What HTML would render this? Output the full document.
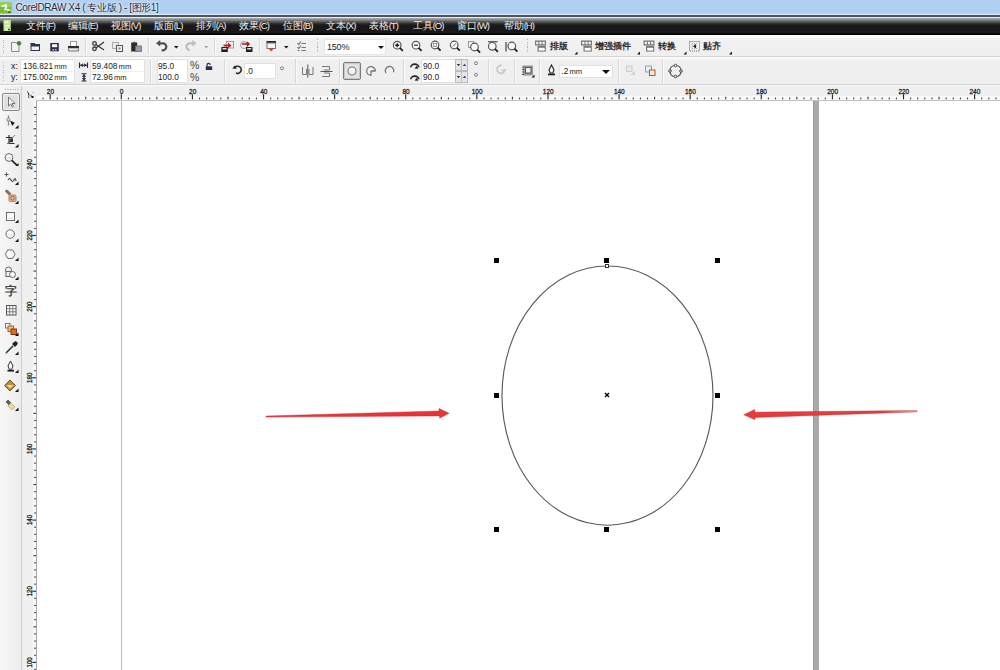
<!DOCTYPE html><html><head><meta charset="utf-8"><style>
*{margin:0;padding:0;box-sizing:border-box}
html,body{width:1000px;height:670px;overflow:hidden;background:#fff;font-family:"Liberation Sans",sans-serif}
.a{position:absolute}
#title{left:0;top:0;width:1000px;height:15px;background:linear-gradient(#b3d0f1,#acd0f1 80%,#bcdcf6);}
#tline{left:0;top:14px;width:1000px;height:1px;background:#dbe9f6}
#tdark{left:0;top:15px;width:1000px;height:2px;background:#4c5662}
#menu{left:0;top:17px;width:1000px;height:18px;background:linear-gradient(#ececec 0,#e6e6e6 1px,#a4a4a4 1.5px,#6a6a6a 4px,#262626 7px,#181818 9px,#181818 16px,#000 17px)}
#tb1{left:0;top:35px;width:1000px;height:22px;background:linear-gradient(#fff 0,#fdfdfd 2px,#f1f1f1 3px,#efefef 100%)}
#tb2{left:0;top:56px;width:1000px;height:30px;background:linear-gradient(#d6d6d6 0,#d6d6d6 1px,#fbfbfb 1px,#f8f8f8 3px,#efefef 4px,#efefef 28px,#d4d4d4 28px,#d4d4d4 29px,#fafafa 29px)}
.menu{top:20px;height:12px;font-size:9.6px;color:#eee;white-space:nowrap;line-height:12px}
.menu b{font-weight:normal;font-size:9.5px;letter-spacing:-1px;margin-left:-0.3px}
.ttl{left:15.5px;top:2px;font-size:10px;letter-spacing:-0.4px;color:#1e2a36;white-space:nowrap;line-height:12px;text-shadow:0 0 3px #fff,0 0 2px #fff}
.t{font-size:8.3px;color:#222;white-space:nowrap;line-height:10px}
.t i{font-style:normal;font-size:7.6px;margin-left:1.2px}
.sep{width:2px;background:linear-gradient(90deg,#d8d8d8 50%,#fbfbfb 50%)}
.fld{background:#fff;border:1px solid #e4e4e4}
.grip{width:1px;background:repeating-linear-gradient(#b4b4b4 0 1px,transparent 1px 2.5px)}
</style></head><body>
<div class="a" id="title"></div><div class="a" id="tline"></div><div class="a" id="tdark"></div><div class="a" id="menu"></div>
<div class="a" id="tb1"></div><div class="a" id="tb2"></div>
<svg class="a" style="left:0;top:0" width="16" height="34"><rect x="0" y="2" width="11.5" height="11.5" fill="#7cbc3c"/><rect x="0" y="2" width="11.5" height="5" fill="#96cc58"/><path d="M1.5 6.5 q3 -2 5 1 M5.5 4 q2 3 -1 6 M6.5 10 q2 -1 3.5 1" stroke="#f4fce8" stroke-width="1.8" fill="none"/><circle cx="9.3" cy="12" r="1" fill="#2a5a1a"/><rect x="3.5" y="20" width="7.3" height="11" fill="#c6e6a0"/><path d="M5 23 q2 -2 3 0 M5.5 26 h4 M5 29 h4" stroke="#f4fce8" stroke-width="1.2" fill="none"/><circle cx="9" cy="29.5" r="0.9" fill="#2a4a1a"/></svg>
<div class="a ttl">CorelDRAW X4 ( 专业版 ) - [图形1]</div>
<div class="a menu" style="left:26px">文件<b>(F)</b></div>
<div class="a menu" style="left:68px">编辑<b>(E)</b></div>
<div class="a menu" style="left:111px">视图<b>(V)</b></div>
<div class="a menu" style="left:154px">版面<b>(L)</b></div>
<div class="a menu" style="left:196px">排列<b>(A)</b></div>
<div class="a menu" style="left:239px">效果<b>(C)</b></div>
<div class="a menu" style="left:283px">位图<b>(B)</b></div>
<div class="a menu" style="left:326px">文本<b>(X)</b></div>
<div class="a menu" style="left:369px">表格<b>(T)</b></div>
<div class="a menu" style="left:413px">工具<b>(O)</b></div>
<div class="a menu" style="left:457px">窗口<b>(W)</b></div>
<div class="a menu" style="left:504px">帮助<b>(H)</b></div>
<div class="a grip" style="left:3px;top:40px;height:14px"></div>
<div class="a grip" style="left:3px;top:62px;height:20px"></div>
<div class="a sep" style="left:85px;top:38px;height:16px"></div>
<div class="a sep" style="left:148px;top:38px;height:16px"></div>
<div class="a sep" style="left:214px;top:38px;height:16px"></div>
<div class="a sep" style="left:259px;top:38px;height:16px"></div>
<div class="a grip" style="left:317px;top:39px;height:15px"></div>
<div class="a grip" style="left:527px;top:39px;height:15px"></div>
<div class="a" style="left:324px;top:39px;width:62px;height:16px;background:#fff;border:1px solid #e6e6e6"></div>
<div class="a t" style="left:327px;top:42px;font-size:9px;letter-spacing:-0.2px">150%</div>
<div class="a" style="left:377.5px;top:45.5px;width:0;height:0;border-left:3.5px solid transparent;border-right:3.5px solid transparent;border-top:3.5px solid #111"></div>
<div class="a" style="left:549.5px;top:40px;font-size:9.2px;line-height:12px;font-weight:bold;color:#2a2a2a;white-space:nowrap">排版</div>
<div class="a" style="left:594.5px;top:40px;font-size:9.2px;line-height:12px;font-weight:bold;color:#2a2a2a;white-space:nowrap">增强插件</div>
<div class="a" style="left:657.5px;top:40px;font-size:9.2px;line-height:12px;font-weight:bold;color:#2a2a2a;white-space:nowrap">转换</div>
<div class="a" style="left:703px;top:40px;font-size:9.2px;line-height:12px;font-weight:bold;color:#2a2a2a;white-space:nowrap">贴齐</div>
<div class="a t" style="left:11px;top:60.8px;font-size:8.8px">x:</div>
<div class="a t" style="left:11px;top:71.8px;font-size:8.8px">y:</div>
<div class="a" style="left:20px;top:59px;width:55px;height:24px;background:#fff;border:1px solid #e2e2e2"></div>
<div class="a" style="left:21px;top:71px;width:53px;height:1px;background:#eee"></div>
<div class="a t" style="left:23px;top:60.8px;">136.821<i>mm</i></div>
<div class="a t" style="left:23px;top:71.8px;">175.002<i>mm</i></div>
<div class="a" style="left:90px;top:59px;width:55px;height:24px;background:#fff;border:1px solid #e2e2e2"></div>
<div class="a" style="left:91px;top:71px;width:53px;height:1px;background:#eee"></div>
<div class="a t" style="left:92px;top:60.8px;">59.408<i>mm</i></div>
<div class="a t" style="left:92px;top:71.8px;">72.96<i>mm</i></div>
<div class="a sep" style="left:150px;top:59px;height:24px"></div>
<div class="a" style="left:157px;top:59px;width:31px;height:24px;background:#fff;border:1px solid #e2e2e2"></div>
<div class="a t" style="left:158px;top:60.8px;">95.0</div>
<div class="a t" style="left:158px;top:71.8px;">100.0</div>
<div class="a t" style="left:190px;top:59.5px;font-size:10.5px;color:#444">%</div>
<div class="a t" style="left:190px;top:71.5px;font-size:10.5px;color:#444">%</div>
<div class="a sep" style="left:224px;top:59px;height:24px"></div>
<div class="a" style="left:244px;top:63px;width:32px;height:16px;background:#fff;border:1px solid #e2e2e2"></div>
<div class="a t" style="left:246px;top:65.5px;">.0</div>
<div class="a sep" style="left:295px;top:59px;height:24px"></div>
<div class="a sep" style="left:339px;top:59px;height:24px"></div>
<div class="a sep" style="left:403px;top:59px;height:24px"></div>
<div class="a" style="left:421px;top:59px;width:35px;height:24px;background:#fff;border:1px solid #e2e2e2"></div>
<div class="a t" style="left:423px;top:60.8px;">90.0</div>
<div class="a t" style="left:423px;top:71.8px;">90.0</div>
<div class="a sep" style="left:488px;top:59px;height:24px"></div>
<div class="a sep" style="left:514px;top:59px;height:24px"></div>
<div class="a sep" style="left:539px;top:59px;height:24px"></div>
<div class="a" style="left:559px;top:65px;width:54px;height:13px;background:#fff;border:1px solid #e2e2e2"></div>
<div class="a t" style="left:561px;top:66px;font-size:8.8px">.2<i>mm</i></div>
<div class="a" style="left:602px;top:70px;width:0;height:0;border-left:4px solid transparent;border-right:4px solid transparent;border-top:4px solid #111"></div>
<div class="a sep" style="left:618px;top:59px;height:24px"></div>
<div class="a sep" style="left:662px;top:59px;height:24px"></div>
<svg class="a" style="left:0;top:0" width="1000" height="86">
<path d="M11.5 42.5 h5 l2.5 2.5 v6.5 h-7.5 Z" fill="#f4f4f4" stroke="#8a8a8a"/>
<circle cx="19" cy="43.3" r="2.2" fill="#3d8a2e"/>
<path d="M30.5 43 h4 l1 1 h4.5 v7 h-9.5 Z" fill="#2a3552"/>
<rect x="31.5" y="46.5" width="7.5" height="3.5" fill="#f2f2f2"/>
<rect x="50.3" y="43" width="8.5" height="8.3" fill="#2c2c48"/>
<rect x="52" y="44.2" width="5.2" height="3" fill="#f4f4f4"/>
<rect x="52.5" y="49" width="1.5" height="1.5" fill="#ccc"/><rect x="55" y="49" width="1.5" height="1.5" fill="#ccc"/>
<rect x="70.5" y="41.5" width="6" height="5" fill="#fff" stroke="#999"/>
<rect x="68" y="46" width="11" height="2.5" fill="#2f2f2f"/>
<path d="M68.5 48.5 v2.5 h10 v-2.5" fill="#e8e8e8" stroke="#777"/>
<g fill="none" stroke="#3a3a3a" stroke-width="1.3"><circle cx="94.5" cy="43.5" r="1.8"/><circle cx="94.5" cy="48.8" r="1.8"/><path d="M96 44.5 L104 50 M96 48 L104 42"/></g>
<rect x="112.5" y="42.5" width="6" height="6" fill="#e6ece6" stroke="#a9b1a9"/>
<rect x="116.5" y="45.5" width="6" height="6" fill="#f0f0f0" stroke="#555"/>
<rect x="118.5" y="47.5" width="2" height="2" fill="#888"/>
<rect x="131.2" y="42.5" width="6" height="9" fill="#2a2e1e"/>
<rect x="133" y="41.8" width="2.5" height="1.5" fill="#555"/>
<rect x="135.5" y="46" width="6" height="5.5" fill="#9a98b0" stroke="#6c6a80" stroke-width="0.8"/>
<path d="M159 43.3 h3.8 a3.5 3.5 0 0 1 0 7 h-1.2" fill="none" stroke="#4b4f59" stroke-width="2.2"/>
<path d="M156 43.3 l4.2 -3.3 v6.6 Z" fill="#4b4f59"/>
<path d="M174 46 h4.5 l-2.25 2.5 Z" fill="#111"/>
<path d="M193 43.3 h-3.3 a3.3 3.3 0 0 0 0 6.6" fill="none" stroke="#bdbdbd" stroke-width="2.2"/>
<path d="M196.5 43.3 l-4.2 -3.3 v6.6 Z" fill="#bdbdbd"/>
<path d="M204 46 h4.5 l-2.25 2.5 Z" fill="#aaa"/>
<rect x="226.5" y="41.5" width="7" height="6.5" fill="#f4f4f4" stroke="#999"/>
<rect x="221.3" y="47" width="6.5" height="5" fill="#1e1e1e"/><rect x="222.5" y="48" width="4" height="1.5" fill="#ddd"/>
<path d="M223.5 45.5 h5" stroke="#b81c1c" stroke-width="1.8"/><path d="M228 42.5 l3.5 3 l-3.5 3 Z" fill="#c01c1c"/>
<circle cx="244" cy="45" r="3.5" fill="#eee" stroke="#9a9aa8"/>
<rect x="246" y="47" width="6.5" height="5" fill="#1e1e1e"/><rect x="247.2" y="48" width="4" height="1.5" fill="#ddd"/>
<path d="M242 44 h7 M247 42 l2 2 l-2 2" stroke="#b01818" stroke-width="1.5" fill="none"/>
<rect x="266.5" y="41" width="9.5" height="2.2" fill="#222"/>
<rect x="267" y="43" width="8.5" height="5.5" fill="#f6f6f6" stroke="#777"/>
<path d="M268.5 48.5 l2.7 3 l2.7 -3 Z" fill="#e03a1a"/>
<path d="M284 46 h4.5 l-2.25 2.5 Z" fill="#111"/>
<g stroke="#777" stroke-width="1.2" fill="none"><path d="M297.5 43 l1.2 1.5 l2.3 -3 M301.5 43.5 h4.5 M297.5 47 l1.2 1.5 l2.3 -3 M301.5 47.5 h4.5 M297.5 50.5 h2 M301.5 50.5 h4.5"/></g>
<g><circle cx="397.2" cy="45.2" r="3.8" fill="#f8f8f8" stroke="#555" stroke-width="1.2"/><path d="M399.8 47.800000000000004 l3 3" stroke="#222" stroke-width="1.8"/><path d="M395.2 45.2 h4 M397.2 43.2 v4" stroke="#222" stroke-width="1.4"/></g>
<g><circle cx="416" cy="45.2" r="3.8" fill="#f8f8f8" stroke="#555" stroke-width="1.2"/><path d="M418.6 47.800000000000004 l3 3" stroke="#222" stroke-width="1.8"/><path d="M414 45.2 h4" stroke="#333" stroke-width="1.2"/></g>
<g><circle cx="435" cy="45" r="3.8" fill="#f8f8f8" stroke="#555" stroke-width="1.2"/><path d="M437.6 47.6 l3 3" stroke="#222" stroke-width="1.8"/><rect x="433.3" y="43.5" width="3.4" height="3" fill="none" stroke="#777" stroke-width="0.7"/></g>
<g><circle cx="454.2" cy="45" r="3.8" fill="#f8f8f8" stroke="#555" stroke-width="1.2"/><path d="M456.8 47.6 l3 3" stroke="#222" stroke-width="1.8"/><path d="M452.5 46.5 l3.5 -3" stroke="#666" stroke-width="0.9"/></g>
<rect x="468.5" y="41.5" width="5" height="6" fill="#f2f2f2" stroke="#999"/>
<g><circle cx="474.5" cy="47" r="3.8" fill="#f8f8f8" stroke="#555" stroke-width="1.2"/><path d="M477.1 49.6 l3 3" stroke="#222" stroke-width="1.8"/></g>
<path d="M488 41.8 h9.5" stroke="#444" stroke-width="1.2"/><g><circle cx="492.3" cy="46.3" r="3.8" fill="#f8f8f8" stroke="#555" stroke-width="1.2"/><path d="M494.90000000000003 48.9 l3 3" stroke="#222" stroke-width="1.8"/></g>
<path d="M506 42 v9.5" stroke="#444" stroke-width="1.2"/><g><circle cx="511.8" cy="46" r="3.8" fill="#f8f8f8" stroke="#555" stroke-width="1.2"/><path d="M514.4 48.6 l3 3" stroke="#222" stroke-width="1.8"/></g>
<rect x="535.0" y="40.5" width="11" height="5" fill="#777"/><rect x="536.2" y="41.8" width="2.2" height="2.4" fill="#f4f4ff"/><rect x="539.4" y="41.8" width="2.2" height="2.4" fill="#f4f4ff"/><rect x="542.6" y="41.8" width="2.2" height="2.4" fill="#f4f4ff"/><rect x="537.5" y="45.8" width="8.3" height="5.8" fill="#777"/><rect x="538.7" y="47.8" width="6" height="2.8" fill="#fff"/>
<rect x="581.0" y="40.5" width="11" height="5" fill="#777"/><rect x="582.2" y="41.8" width="2.2" height="2.4" fill="#f4f4ff"/><rect x="585.4" y="41.8" width="2.2" height="2.4" fill="#f4f4ff"/><rect x="588.6" y="41.8" width="2.2" height="2.4" fill="#f4f4ff"/><rect x="583.5" y="45.8" width="8.3" height="5.8" fill="#777"/><rect x="584.7" y="47.8" width="6" height="2.8" fill="#fff"/>
<rect x="643.5" y="40.5" width="11" height="5" fill="#777"/><rect x="644.7" y="41.8" width="2.2" height="2.4" fill="#f4f4ff"/><rect x="647.9" y="41.8" width="2.2" height="2.4" fill="#f4f4ff"/><rect x="651.1" y="41.8" width="2.2" height="2.4" fill="#f4f4ff"/><rect x="646" y="45.8" width="8.3" height="5.8" fill="#777"/><rect x="647.2" y="47.8" width="6" height="2.8" fill="#fff"/>
<rect x="689.5" y="41.5" width="10" height="9.5" fill="none" stroke="#666" stroke-dasharray="1 1"/>
<path d="M692 43.5 h5 M692 46 h5 M692 48.5 h5 M692 43.5 v5 M694.5 43.5 v5" stroke="#999" stroke-width="0.8" stroke-dasharray="1 1"/>
<path d="M696 44 l-3 2.2 l3 2.2 Z" fill="#222"/>
<path d="M577.5 51.5 v3 h-3 Z" fill="#111"/>
<path d="M640.0 51.5 v3 h-3 Z" fill="#111"/>
<path d="M686.5 51.5 v3 h-3 Z" fill="#111"/>
<path d="M732.0 51.5 v3 h-3 Z" fill="#111"/>
<path d="M79.5 62.5 v5.5 M87.5 62.5 v5.5 M80 65.3 h7" stroke="#2a2a40" stroke-width="1.1"/><path d="M80.3 65.3 l2.6 -2 v4 Z M86.7 65.3 l-2.6 -2 v4 Z" fill="#2a2a40"/>
<path d="M81.5 73.8 h5 M81.5 81 h5 M84 74 v7" stroke="#2a2a40" stroke-width="1.1"/><path d="M84 74.5 l-2.2 2.6 h4.4 Z M84 80.5 l-2.2 -2.6 h4.4 Z" fill="#2a2a40"/>
<rect x="205.8" y="66.3" width="6.4" height="3.7" fill="#2a2a50"/><path d="M207 66.5 v-1.5 a1.6 1.6 0 0 1 3.2 0" fill="none" stroke="#2a2a50" stroke-width="1.2"/>
<path d="M234.5 68 a3.6 3.6 0 1 1 1.5 5" fill="none" stroke="#222" stroke-width="1.6"/><path d="M232.3 68.5 l2.5 -3 l2 3.3 Z" fill="#222"/>
<circle cx="282" cy="68.3" r="1.5" fill="none" stroke="#777" stroke-width="0.9"/>
<g fill="none" stroke="#777" stroke-width="1"><path d="M302.5 67 v7.5 h4 v-5.5 M313 67 v7.5 h-4 v-5.5"/><path d="M307.8 64.5 v13" stroke="#555"/></g>
<g fill="none" stroke="#777" stroke-width="1"><path d="M322 66.5 h7.5 v3.5 h-5.5 M322 76.5 h7.5 v-3.5 h-5.5"/><path d="M320.5 71.5 h12" stroke="#555"/></g>
<rect x="343.5" y="62.5" width="17" height="17" rx="1.5" fill="#e2e2e2" stroke="#7a7a7a"/>
<rect x="344.5" y="63.5" width="15" height="15" fill="none" stroke="#c8c8c8"/>
<circle cx="352" cy="71" r="4" fill="#f4f4f4" stroke="#777" stroke-width="1.1"/>
<path d="M371 71 h4.3 A4.3 4.3 0 1 0 371 75.3 Z" fill="#f6f6f6" stroke="#777" stroke-width="1.3" stroke-linejoin="round"/>
<path d="M386 73.2 A4.3 4.3 0 1 1 393.6 72.2" fill="none" stroke="#777" stroke-width="1.3"/>
<path d="M410.8 67.3 a4 3.2 0 1 1 8 0" fill="none" stroke="#222" stroke-width="1.6"/><path d="M414.5 68.39999999999999 l2.5 -3 l1.2 3.4 Z" fill="#222"/>
<path d="M410.8 79.3 a4 3.2 0 1 1 8 0" fill="none" stroke="#222" stroke-width="1.6"/><path d="M414.5 80.39999999999999 l2.5 -3 l1.2 3.4 Z" fill="#222"/>
<rect x="455.5" y="59.5" width="6" height="11" fill="#e6e6e6" stroke="#bbb"/><rect x="461.5" y="59.5" width="6" height="11" fill="#e6e6e6" stroke="#bbb"/>
<path d="M456.8 64.0 h3.4 l-1.7 2.3 Z" fill="#333"/><path d="M462.8 66.0 h3.4 l-1.7 -2.3 Z" fill="#3a3a7a"/>
<rect x="455.5" y="71.5" width="6" height="11" fill="#e6e6e6" stroke="#bbb"/><rect x="461.5" y="71.5" width="6" height="11" fill="#e6e6e6" stroke="#bbb"/>
<path d="M456.8 76.0 h3.4 l-1.7 2.3 Z" fill="#333"/><path d="M462.8 78.0 h3.4 l-1.7 -2.3 Z" fill="#3a3a7a"/>
<circle cx="476" cy="63.2" r="1.5" fill="none" stroke="#777" stroke-width="0.9"/><circle cx="476" cy="74.8" r="1.5" fill="none" stroke="#777" stroke-width="0.9"/>
<g fill="none" stroke="#c8c8c8" stroke-width="1.6"><path d="M505 69 a4 4 0 1 1 -3 -3.5"/><path d="M501.5 70.5 h3"/></g>
<rect x="523" y="65.5" width="10" height="10" fill="#999"/><rect x="525.5" y="67.5" width="5.5" height="5.5" fill="#f0f0f0" stroke="#555"/>
<path d="M522 67 h2 M522 69.5 h2 M522 72 h2 M522 74.5 h2" stroke="#555"/><path d="M534.5 74.5 v3 h-3 Z" fill="#111"/>
<path d="M551.5 65 l-2.5 5 l1.2 3 h2.6 l1.2 -3 Z" fill="#f4f4f4" stroke="#222" stroke-width="1.1"/><rect x="548" y="73.5" width="7" height="1.8" fill="#222"/>
<rect x="626.5" y="66" width="5.5" height="5.5" fill="#e8e8e8" stroke="#ccc"/><path d="M631 71 l3.5 3.5 l0 -3 M631 74.5 h3.5" stroke="#ccc" fill="none"/>
<rect x="645.5" y="66" width="6" height="6" fill="#e8eef8" stroke="#8aa"/><rect x="649.5" y="70" width="5.5" height="5.5" fill="#fbe8d8" stroke="#b05a20"/>
<g fill="none" stroke="#555" stroke-width="1.1"><path d="M675.5 65.5 q5.5 0 5.5 5.5 q0 5.5 -5.5 5.5 q-5.5 0 -5.5 -5.5 q0 -5.5 5.5 -5.5 Z"/></g>
<g fill="#fff" stroke="#444" stroke-width="1"><circle cx="675.5" cy="65.5" r="1.3"/><circle cx="681" cy="71" r="1.3"/><circle cx="675.5" cy="76.5" r="1.3"/><circle cx="670" cy="71" r="1.3"/></g>
</svg>
<svg class="a" style="left:0;top:86px" width="1000" height="584">
<defs><linearGradient id="tbx" x1="0" x2="1"><stop offset="0" stop-color="#f7f7f7"/><stop offset="1" stop-color="#ececec"/></linearGradient></defs>
<rect x="0" y="0" width="22" height="584" fill="url(#tbx)"/>
<rect x="21" y="0" width="1" height="584" fill="#cfcfcf"/>
<g transform="translate(0 -86)">
<rect x="5" y="89" width="1" height="1" fill="#aaa"/>
<rect x="7.5" y="89" width="1" height="1" fill="#aaa"/>
<rect x="10" y="89" width="1" height="1" fill="#aaa"/>
<rect x="12.5" y="89" width="1" height="1" fill="#aaa"/>
<rect x="15" y="89" width="1" height="1" fill="#aaa"/>
<rect x="17.5" y="89" width="1" height="1" fill="#aaa"/>
<rect x="2.5" y="93.5" width="17" height="17" rx="1.5" fill="#e0e0e0" stroke="#888"/>
<rect x="3.5" y="94.5" width="15" height="15" rx="1" fill="none" stroke="#f4f4f4"/>
<path d="M8.5 97 v9 l2.2 -2 l1.6 3 l1.3 -0.7 l-1.6 -2.8 h3 Z" fill="#f8f8f8" stroke="#666" stroke-width="0.9"/>
<path d="M8.5 115.5 v10" stroke="#8a8a8a" stroke-width="1.3"/><circle cx="8.3" cy="119.6" r="1.5" fill="#e8e8e8" stroke="#777" stroke-width="0.9"/><path d="M10 120.5 l4.8 2.2 l-2.6 3.2 Z" fill="#1e1e1e"/><path d="M18.5 128.5 v-3.5 l-3.5 3.5 Z" fill="#111"/>
<path d="M5.8 137.5 h7 M9 135 v8.5 h5.5" fill="none" stroke="#333" stroke-width="1.2"/><path d="M7 144 l8 -9" stroke="#666" stroke-width="0.9"/><rect x="9.6" y="138.6" width="3.4" height="3.6" fill="#33334a"/><path d="M18.5 147.5 v-3.5 l-3.5 3.5 Z" fill="#111"/>
<circle cx="9" cy="157.5" r="3.9" fill="#f8f8f8" stroke="#6a6a6a" stroke-width="1"/><path d="M7.2 157.8 h3.6" stroke="#bbb" stroke-width="0.8"/><path d="M11.8 160.3 l5 4.8" stroke="#222" stroke-width="1.7"/><path d="M18.5 166 v-3 l-3 3 Z" fill="#111"/>
<path d="M4.5 174.5 h4 M6.5 172.5 v4" stroke="#555" stroke-width="1"/><path d="M8 180 q1.5 -3 3 0 t3 0 t2 1" fill="none" stroke="#444" stroke-width="1.2"/><path d="M18.5 185 v-3.5 l-3.5 3.5 Z" fill="#111"/>
<path d="M5 191.5 l2.5 -1.8 l4 4 l-2.5 1.8 Z" fill="#8a7060"/><path d="M5.5 191 l1.5 -1" stroke="#444"/><rect x="9" y="195" width="7" height="6.5" rx="1.2" fill="#e8b890" stroke="#a07050" stroke-width="0.8"/><circle cx="12.5" cy="198.2" r="1.9" fill="none" stroke="#9a5a3a" stroke-width="0.9"/><path d="M18.5 204 v-3.5 l-3.5 3.5 Z" fill="#111"/>
<rect x="6.5" y="212.5" width="8" height="8" fill="#fafafa" stroke="#6a6a6a" stroke-width="1"/><path d="M8.5 218.5 h4" stroke="#ccc" stroke-width="0.6"/><path d="M18.5 223 v-3.5 l-3.5 3.5 Z" fill="#111"/>
<circle cx="10.2" cy="234" r="4.2" fill="#fafafa" stroke="#6a6a6a" stroke-width="1"/><path d="M8.5 235 h3.5" stroke="#ccc" stroke-width="0.6"/><path d="M18.5 242 v-3.5 l-3.5 3.5 Z" fill="#111"/>
<path d="M7.8 250 h4.8 l2.5 4.2 l-2.5 4.2 h-4.8 l-2.5 -4.2 Z" fill="#fafafa" stroke="#6a6a6a" stroke-width="1"/><path d="M18.5 261 v-3.5 l-3.5 3.5 Z" fill="#111"/>
<circle cx="8.5" cy="270" r="3" fill="#f2f2f2" stroke="#666"/><rect x="6" y="271.5" width="5" height="5" fill="#f2f2f2" stroke="#666"/><circle cx="12.5" cy="274.5" r="3" fill="#fafafa" stroke="#666"/><path d="M18.5 280 v-3.5 l-3.5 3.5 Z" fill="#111"/>
<text x="10.8" y="295.3" font-size="11.5" text-anchor="middle" fill="#444" font-weight="bold">字</text>
<rect x="6.5" y="305.5" width="9.5" height="9.5" fill="#fafafa" stroke="#555"/><path d="M9.7 305.5 v9.5 M12.8 305.5 v9.5 M6.5 308.7 h9.5 M6.5 311.8 h9.5" stroke="#666" stroke-width="0.8"/>
<rect x="5.5" y="323.5" width="4.5" height="4.5" fill="#fff" stroke="#777"/><rect x="8" y="326" width="5.5" height="5.5" fill="#f2c080" stroke="#a06030"/><rect x="11" y="329" width="5.5" height="5.5" fill="#e06a1a" stroke="#803a10"/><path d="M18.5 336 v-3.5 l-3.5 3.5 Z" fill="#111"/>
<path d="M6 353 l7 -7" stroke="#333" stroke-width="1.6"/><path d="M12 344 l3 3 l2 -2 a2 2 0 0 0 -3 -3 Z" fill="#222"/><path d="M5.5 353.5 l1.5 -0.5" stroke="#999"/><path d="M18.5 355 v-3.5 l-3.5 3.5 Z" fill="#111"/>
<path d="M10.5 361 l-2.5 5 l1.3 3.3 h2.4 l1.3 -3.3 Z" fill="#fafafa" stroke="#333" stroke-width="1"/><rect x="7.5" y="369.8" width="6.5" height="1.8" fill="#222"/><path d="M18.5 373 v-3.5 l-3.5 3.5 Z" fill="#111"/>
<path d="M10 380 l5.5 5.5 l-5.5 5.5 l-5.5 -5.5 Z" fill="#c08a3a" stroke="#6a4a20" stroke-width="0.9"/><path d="M6.5 385 h7 l-3.5 3.5 Z" fill="#f0d8a0"/><path d="M18.5 392 v-3.5 l-3.5 3.5 Z" fill="#111"/>
<path d="M8 400 l3 3 l-2 2 l-3 -3 Z" fill="#6a5a5a" stroke="#555" stroke-width="0.8"/><path d="M11 403 l4 4 l-3 3 l-4 -4 Z" fill="#ead9a0" stroke="#c0b070" stroke-width="0.8"/><path d="M18.5 411 v-3.5 l-3.5 3.5 Z" fill="#111"/>
</g>
<rect x="22" y="0" width="978" height="15" fill="#f0f0f0"/>
<rect x="22" y="15" width="15" height="569" fill="#f0f0f0"/>
<g transform="translate(0 -86)" fill="#333"><rect x="27" y="91.5" width="1" height="1"/><rect x="28" y="92.5" width="1" height="3"/><rect x="28" y="96.5" width="1.3" height="1.3"/><rect x="29.5" y="94.5" width="1" height="1"/><rect x="30.5" y="95.5" width="1.5" height="1"/><rect x="31.5" y="96" width="2" height="2" fill="#111"/><rect x="32.5" y="92" width="1.2" height="1.2" fill="#aaa"/></g>
<rect x="36" y="14" width="1" height="570" fill="#a8a8a8"/>
<rect x="37" y="15" width="963" height="569" fill="#fff"/>
<rect x="37" y="10" width="963" height="3.6" fill="#f9f9f9"/>
<rect x="33" y="15" width="3" height="569" fill="#f8f8f8"/>
<rect x="42.53" y="11.6" width="1.1" height="1.7" fill="#3a3a3a"/>
<rect x="49.64" y="8.3" width="1.1" height="5" fill="#222"/>
<text x="46.8" y="7.7" font-size="8" textLength="7.2" lengthAdjust="spacingAndGlyphs" fill="#222" stroke="#222" stroke-width="0.3" font-family="Liberation Sans">20</text>
<rect x="56.75" y="11.6" width="1.1" height="1.7" fill="#3a3a3a"/>
<rect x="63.86" y="11.6" width="1.1" height="1.7" fill="#3a3a3a"/>
<rect x="70.97" y="11.6" width="1.1" height="1.7" fill="#3a3a3a"/>
<rect x="78.08" y="11.6" width="1.1" height="1.7" fill="#3a3a3a"/>
<rect x="85.19" y="10.8" width="1.1" height="2.5" fill="#333"/>
<rect x="92.31" y="11.6" width="1.1" height="1.7" fill="#3a3a3a"/>
<rect x="99.42" y="11.6" width="1.1" height="1.7" fill="#3a3a3a"/>
<rect x="106.53" y="11.6" width="1.1" height="1.7" fill="#3a3a3a"/>
<rect x="113.64" y="11.6" width="1.1" height="1.7" fill="#3a3a3a"/>
<rect x="120.75" y="8.3" width="1.1" height="5" fill="#222"/>
<text x="119.8" y="7.7" font-size="8" textLength="3.6" lengthAdjust="spacingAndGlyphs" fill="#222" stroke="#222" stroke-width="0.3" font-family="Liberation Sans">0</text>
<rect x="127.86" y="11.6" width="1.1" height="1.7" fill="#3a3a3a"/>
<rect x="134.97" y="11.6" width="1.1" height="1.7" fill="#3a3a3a"/>
<rect x="142.08" y="11.6" width="1.1" height="1.7" fill="#3a3a3a"/>
<rect x="149.19" y="11.6" width="1.1" height="1.7" fill="#3a3a3a"/>
<rect x="156.31" y="10.8" width="1.1" height="2.5" fill="#333"/>
<rect x="163.42" y="11.6" width="1.1" height="1.7" fill="#3a3a3a"/>
<rect x="170.53" y="11.6" width="1.1" height="1.7" fill="#3a3a3a"/>
<rect x="177.64" y="11.6" width="1.1" height="1.7" fill="#3a3a3a"/>
<rect x="184.75" y="11.6" width="1.1" height="1.7" fill="#3a3a3a"/>
<rect x="191.86" y="8.3" width="1.1" height="5" fill="#222"/>
<text x="189.1" y="7.7" font-size="8" textLength="7.2" lengthAdjust="spacingAndGlyphs" fill="#222" stroke="#222" stroke-width="0.3" font-family="Liberation Sans">20</text>
<rect x="198.97" y="11.6" width="1.1" height="1.7" fill="#3a3a3a"/>
<rect x="206.08" y="11.6" width="1.1" height="1.7" fill="#3a3a3a"/>
<rect x="213.19" y="11.6" width="1.1" height="1.7" fill="#3a3a3a"/>
<rect x="220.30" y="11.6" width="1.1" height="1.7" fill="#3a3a3a"/>
<rect x="227.41" y="10.8" width="1.1" height="2.5" fill="#333"/>
<rect x="234.53" y="11.6" width="1.1" height="1.7" fill="#3a3a3a"/>
<rect x="241.64" y="11.6" width="1.1" height="1.7" fill="#3a3a3a"/>
<rect x="248.75" y="11.6" width="1.1" height="1.7" fill="#3a3a3a"/>
<rect x="255.86" y="11.6" width="1.1" height="1.7" fill="#3a3a3a"/>
<rect x="262.97" y="8.3" width="1.1" height="5" fill="#222"/>
<text x="260.2" y="7.7" font-size="8" textLength="7.2" lengthAdjust="spacingAndGlyphs" fill="#222" stroke="#222" stroke-width="0.3" font-family="Liberation Sans">40</text>
<rect x="270.08" y="11.6" width="1.1" height="1.7" fill="#3a3a3a"/>
<rect x="277.19" y="11.6" width="1.1" height="1.7" fill="#3a3a3a"/>
<rect x="284.30" y="11.6" width="1.1" height="1.7" fill="#3a3a3a"/>
<rect x="291.41" y="11.6" width="1.1" height="1.7" fill="#3a3a3a"/>
<rect x="298.52" y="10.8" width="1.1" height="2.5" fill="#333"/>
<rect x="305.64" y="11.6" width="1.1" height="1.7" fill="#3a3a3a"/>
<rect x="312.75" y="11.6" width="1.1" height="1.7" fill="#3a3a3a"/>
<rect x="319.86" y="11.6" width="1.1" height="1.7" fill="#3a3a3a"/>
<rect x="326.97" y="11.6" width="1.1" height="1.7" fill="#3a3a3a"/>
<rect x="334.08" y="8.3" width="1.1" height="5" fill="#222"/>
<text x="331.3" y="7.7" font-size="8" textLength="7.2" lengthAdjust="spacingAndGlyphs" fill="#222" stroke="#222" stroke-width="0.3" font-family="Liberation Sans">60</text>
<rect x="341.19" y="11.6" width="1.1" height="1.7" fill="#3a3a3a"/>
<rect x="348.30" y="11.6" width="1.1" height="1.7" fill="#3a3a3a"/>
<rect x="355.41" y="11.6" width="1.1" height="1.7" fill="#3a3a3a"/>
<rect x="362.52" y="11.6" width="1.1" height="1.7" fill="#3a3a3a"/>
<rect x="369.63" y="10.8" width="1.1" height="2.5" fill="#333"/>
<rect x="376.75" y="11.6" width="1.1" height="1.7" fill="#3a3a3a"/>
<rect x="383.86" y="11.6" width="1.1" height="1.7" fill="#3a3a3a"/>
<rect x="390.97" y="11.6" width="1.1" height="1.7" fill="#3a3a3a"/>
<rect x="398.08" y="11.6" width="1.1" height="1.7" fill="#3a3a3a"/>
<rect x="405.19" y="8.3" width="1.1" height="5" fill="#222"/>
<text x="402.4" y="7.7" font-size="8" textLength="7.2" lengthAdjust="spacingAndGlyphs" fill="#222" stroke="#222" stroke-width="0.3" font-family="Liberation Sans">80</text>
<rect x="412.30" y="11.6" width="1.1" height="1.7" fill="#3a3a3a"/>
<rect x="419.41" y="11.6" width="1.1" height="1.7" fill="#3a3a3a"/>
<rect x="426.52" y="11.6" width="1.1" height="1.7" fill="#3a3a3a"/>
<rect x="433.63" y="11.6" width="1.1" height="1.7" fill="#3a3a3a"/>
<rect x="440.75" y="10.8" width="1.1" height="2.5" fill="#333"/>
<rect x="447.86" y="11.6" width="1.1" height="1.7" fill="#3a3a3a"/>
<rect x="454.97" y="11.6" width="1.1" height="1.7" fill="#3a3a3a"/>
<rect x="462.08" y="11.6" width="1.1" height="1.7" fill="#3a3a3a"/>
<rect x="469.19" y="11.6" width="1.1" height="1.7" fill="#3a3a3a"/>
<rect x="476.30" y="8.3" width="1.1" height="5" fill="#222"/>
<text x="471.7" y="7.7" font-size="8" textLength="10.8" lengthAdjust="spacingAndGlyphs" fill="#222" stroke="#222" stroke-width="0.3" font-family="Liberation Sans">100</text>
<rect x="483.41" y="11.6" width="1.1" height="1.7" fill="#3a3a3a"/>
<rect x="490.52" y="11.6" width="1.1" height="1.7" fill="#3a3a3a"/>
<rect x="497.63" y="11.6" width="1.1" height="1.7" fill="#3a3a3a"/>
<rect x="504.74" y="11.6" width="1.1" height="1.7" fill="#3a3a3a"/>
<rect x="511.86" y="10.8" width="1.1" height="2.5" fill="#333"/>
<rect x="518.97" y="11.6" width="1.1" height="1.7" fill="#3a3a3a"/>
<rect x="526.08" y="11.6" width="1.1" height="1.7" fill="#3a3a3a"/>
<rect x="533.19" y="11.6" width="1.1" height="1.7" fill="#3a3a3a"/>
<rect x="540.30" y="11.6" width="1.1" height="1.7" fill="#3a3a3a"/>
<rect x="547.41" y="8.3" width="1.1" height="5" fill="#222"/>
<text x="542.8" y="7.7" font-size="8" textLength="10.8" lengthAdjust="spacingAndGlyphs" fill="#222" stroke="#222" stroke-width="0.3" font-family="Liberation Sans">120</text>
<rect x="554.52" y="11.6" width="1.1" height="1.7" fill="#3a3a3a"/>
<rect x="561.63" y="11.6" width="1.1" height="1.7" fill="#3a3a3a"/>
<rect x="568.74" y="11.6" width="1.1" height="1.7" fill="#3a3a3a"/>
<rect x="575.85" y="11.6" width="1.1" height="1.7" fill="#3a3a3a"/>
<rect x="582.96" y="10.8" width="1.1" height="2.5" fill="#333"/>
<rect x="590.08" y="11.6" width="1.1" height="1.7" fill="#3a3a3a"/>
<rect x="597.19" y="11.6" width="1.1" height="1.7" fill="#3a3a3a"/>
<rect x="604.30" y="11.6" width="1.1" height="1.7" fill="#3a3a3a"/>
<rect x="611.41" y="11.6" width="1.1" height="1.7" fill="#3a3a3a"/>
<rect x="618.52" y="8.3" width="1.1" height="5" fill="#222"/>
<text x="613.9" y="7.7" font-size="8" textLength="10.8" lengthAdjust="spacingAndGlyphs" fill="#222" stroke="#222" stroke-width="0.3" font-family="Liberation Sans">140</text>
<rect x="625.63" y="11.6" width="1.1" height="1.7" fill="#3a3a3a"/>
<rect x="632.74" y="11.6" width="1.1" height="1.7" fill="#3a3a3a"/>
<rect x="639.85" y="11.6" width="1.1" height="1.7" fill="#3a3a3a"/>
<rect x="646.96" y="11.6" width="1.1" height="1.7" fill="#3a3a3a"/>
<rect x="654.07" y="10.8" width="1.1" height="2.5" fill="#333"/>
<rect x="661.19" y="11.6" width="1.1" height="1.7" fill="#3a3a3a"/>
<rect x="668.30" y="11.6" width="1.1" height="1.7" fill="#3a3a3a"/>
<rect x="675.41" y="11.6" width="1.1" height="1.7" fill="#3a3a3a"/>
<rect x="682.52" y="11.6" width="1.1" height="1.7" fill="#3a3a3a"/>
<rect x="689.63" y="8.3" width="1.1" height="5" fill="#222"/>
<text x="685.0" y="7.7" font-size="8" textLength="10.8" lengthAdjust="spacingAndGlyphs" fill="#222" stroke="#222" stroke-width="0.3" font-family="Liberation Sans">160</text>
<rect x="696.74" y="11.6" width="1.1" height="1.7" fill="#3a3a3a"/>
<rect x="703.85" y="11.6" width="1.1" height="1.7" fill="#3a3a3a"/>
<rect x="710.96" y="11.6" width="1.1" height="1.7" fill="#3a3a3a"/>
<rect x="718.07" y="11.6" width="1.1" height="1.7" fill="#3a3a3a"/>
<rect x="725.18" y="10.8" width="1.1" height="2.5" fill="#333"/>
<rect x="732.30" y="11.6" width="1.1" height="1.7" fill="#3a3a3a"/>
<rect x="739.41" y="11.6" width="1.1" height="1.7" fill="#3a3a3a"/>
<rect x="746.52" y="11.6" width="1.1" height="1.7" fill="#3a3a3a"/>
<rect x="753.63" y="11.6" width="1.1" height="1.7" fill="#3a3a3a"/>
<rect x="760.74" y="8.3" width="1.1" height="5" fill="#222"/>
<text x="756.1" y="7.7" font-size="8" textLength="10.8" lengthAdjust="spacingAndGlyphs" fill="#222" stroke="#222" stroke-width="0.3" font-family="Liberation Sans">180</text>
<rect x="767.85" y="11.6" width="1.1" height="1.7" fill="#3a3a3a"/>
<rect x="774.96" y="11.6" width="1.1" height="1.7" fill="#3a3a3a"/>
<rect x="782.07" y="11.6" width="1.1" height="1.7" fill="#3a3a3a"/>
<rect x="789.18" y="11.6" width="1.1" height="1.7" fill="#3a3a3a"/>
<rect x="796.29" y="10.8" width="1.1" height="2.5" fill="#333"/>
<rect x="803.41" y="11.6" width="1.1" height="1.7" fill="#3a3a3a"/>
<rect x="810.52" y="11.6" width="1.1" height="1.7" fill="#3a3a3a"/>
<rect x="817.63" y="11.6" width="1.1" height="1.7" fill="#3a3a3a"/>
<rect x="824.74" y="11.6" width="1.1" height="1.7" fill="#3a3a3a"/>
<rect x="831.85" y="8.3" width="1.1" height="5" fill="#222"/>
<text x="827.2" y="7.7" font-size="8" textLength="10.8" lengthAdjust="spacingAndGlyphs" fill="#222" stroke="#222" stroke-width="0.3" font-family="Liberation Sans">200</text>
<rect x="838.96" y="11.6" width="1.1" height="1.7" fill="#3a3a3a"/>
<rect x="846.07" y="11.6" width="1.1" height="1.7" fill="#3a3a3a"/>
<rect x="853.18" y="11.6" width="1.1" height="1.7" fill="#3a3a3a"/>
<rect x="860.29" y="11.6" width="1.1" height="1.7" fill="#3a3a3a"/>
<rect x="867.40" y="10.8" width="1.1" height="2.5" fill="#333"/>
<rect x="874.52" y="11.6" width="1.1" height="1.7" fill="#3a3a3a"/>
<rect x="881.63" y="11.6" width="1.1" height="1.7" fill="#3a3a3a"/>
<rect x="888.74" y="11.6" width="1.1" height="1.7" fill="#3a3a3a"/>
<rect x="895.85" y="11.6" width="1.1" height="1.7" fill="#3a3a3a"/>
<rect x="902.96" y="8.3" width="1.1" height="5" fill="#222"/>
<text x="898.4" y="7.7" font-size="8" textLength="10.8" lengthAdjust="spacingAndGlyphs" fill="#222" stroke="#222" stroke-width="0.3" font-family="Liberation Sans">220</text>
<rect x="910.07" y="11.6" width="1.1" height="1.7" fill="#3a3a3a"/>
<rect x="917.18" y="11.6" width="1.1" height="1.7" fill="#3a3a3a"/>
<rect x="924.29" y="11.6" width="1.1" height="1.7" fill="#3a3a3a"/>
<rect x="931.40" y="11.6" width="1.1" height="1.7" fill="#3a3a3a"/>
<rect x="938.51" y="10.8" width="1.1" height="2.5" fill="#333"/>
<rect x="945.63" y="11.6" width="1.1" height="1.7" fill="#3a3a3a"/>
<rect x="952.74" y="11.6" width="1.1" height="1.7" fill="#3a3a3a"/>
<rect x="959.85" y="11.6" width="1.1" height="1.7" fill="#3a3a3a"/>
<rect x="966.96" y="11.6" width="1.1" height="1.7" fill="#3a3a3a"/>
<rect x="974.07" y="8.3" width="1.1" height="5" fill="#222"/>
<text x="969.5" y="7.7" font-size="8" textLength="10.8" lengthAdjust="spacingAndGlyphs" fill="#222" stroke="#222" stroke-width="0.3" font-family="Liberation Sans">240</text>
<rect x="981.18" y="11.6" width="1.1" height="1.7" fill="#3a3a3a"/>
<rect x="988.29" y="11.6" width="1.1" height="1.7" fill="#3a3a3a"/>
<rect x="995.40" y="11.6" width="1.1" height="1.7" fill="#3a3a3a"/>
<rect x="36" y="14" width="964" height="1" fill="#c4c4c4"/>
<rect x="34.2" y="582.97" width="1.7" height="1.1" fill="#3a3a3a"/>
<rect x="32.5" y="575.85" width="3.5" height="1.1" fill="#222"/>
<text transform="translate(32.3 581.5) rotate(-90)" font-size="8" textLength="10.2" lengthAdjust="spacingAndGlyphs" fill="#222" stroke="#222" stroke-width="0.3" font-family="Liberation Sans">100</text>
<rect x="34.2" y="568.74" width="1.7" height="1.1" fill="#3a3a3a"/>
<rect x="34.2" y="561.62" width="1.7" height="1.1" fill="#3a3a3a"/>
<rect x="34.2" y="554.51" width="1.7" height="1.1" fill="#3a3a3a"/>
<rect x="34.2" y="547.39" width="1.7" height="1.1" fill="#3a3a3a"/>
<rect x="33.5" y="540.28" width="2.5" height="1.1" fill="#333"/>
<rect x="34.2" y="533.16" width="1.7" height="1.1" fill="#3a3a3a"/>
<rect x="34.2" y="526.05" width="1.7" height="1.1" fill="#3a3a3a"/>
<rect x="34.2" y="518.93" width="1.7" height="1.1" fill="#3a3a3a"/>
<rect x="34.2" y="511.82" width="1.7" height="1.1" fill="#3a3a3a"/>
<rect x="32.5" y="504.70" width="3.5" height="1.1" fill="#222"/>
<text transform="translate(32.3 510.3) rotate(-90)" font-size="8" textLength="10.2" lengthAdjust="spacingAndGlyphs" fill="#222" stroke="#222" stroke-width="0.3" font-family="Liberation Sans">120</text>
<rect x="34.2" y="497.59" width="1.7" height="1.1" fill="#3a3a3a"/>
<rect x="34.2" y="490.47" width="1.7" height="1.1" fill="#3a3a3a"/>
<rect x="34.2" y="483.36" width="1.7" height="1.1" fill="#3a3a3a"/>
<rect x="34.2" y="476.24" width="1.7" height="1.1" fill="#3a3a3a"/>
<rect x="33.5" y="469.12" width="2.5" height="1.1" fill="#333"/>
<rect x="34.2" y="462.01" width="1.7" height="1.1" fill="#3a3a3a"/>
<rect x="34.2" y="454.89" width="1.7" height="1.1" fill="#3a3a3a"/>
<rect x="34.2" y="447.78" width="1.7" height="1.1" fill="#3a3a3a"/>
<rect x="34.2" y="440.66" width="1.7" height="1.1" fill="#3a3a3a"/>
<rect x="32.5" y="433.55" width="3.5" height="1.1" fill="#222"/>
<text transform="translate(32.3 439.1) rotate(-90)" font-size="8" textLength="10.2" lengthAdjust="spacingAndGlyphs" fill="#222" stroke="#222" stroke-width="0.3" font-family="Liberation Sans">140</text>
<rect x="34.2" y="426.43" width="1.7" height="1.1" fill="#3a3a3a"/>
<rect x="34.2" y="419.32" width="1.7" height="1.1" fill="#3a3a3a"/>
<rect x="34.2" y="412.21" width="1.7" height="1.1" fill="#3a3a3a"/>
<rect x="34.2" y="405.09" width="1.7" height="1.1" fill="#3a3a3a"/>
<rect x="33.5" y="397.98" width="2.5" height="1.1" fill="#333"/>
<rect x="34.2" y="390.86" width="1.7" height="1.1" fill="#3a3a3a"/>
<rect x="34.2" y="383.75" width="1.7" height="1.1" fill="#3a3a3a"/>
<rect x="34.2" y="376.63" width="1.7" height="1.1" fill="#3a3a3a"/>
<rect x="34.2" y="369.52" width="1.7" height="1.1" fill="#3a3a3a"/>
<rect x="32.5" y="362.40" width="3.5" height="1.1" fill="#222"/>
<text transform="translate(32.3 368.0) rotate(-90)" font-size="8" textLength="10.2" lengthAdjust="spacingAndGlyphs" fill="#222" stroke="#222" stroke-width="0.3" font-family="Liberation Sans">160</text>
<rect x="34.2" y="355.29" width="1.7" height="1.1" fill="#3a3a3a"/>
<rect x="34.2" y="348.17" width="1.7" height="1.1" fill="#3a3a3a"/>
<rect x="34.2" y="341.06" width="1.7" height="1.1" fill="#3a3a3a"/>
<rect x="34.2" y="333.94" width="1.7" height="1.1" fill="#3a3a3a"/>
<rect x="33.5" y="326.83" width="2.5" height="1.1" fill="#333"/>
<rect x="34.2" y="319.71" width="1.7" height="1.1" fill="#3a3a3a"/>
<rect x="34.2" y="312.60" width="1.7" height="1.1" fill="#3a3a3a"/>
<rect x="34.2" y="305.48" width="1.7" height="1.1" fill="#3a3a3a"/>
<rect x="34.2" y="298.37" width="1.7" height="1.1" fill="#3a3a3a"/>
<rect x="32.5" y="291.25" width="3.5" height="1.1" fill="#222"/>
<text transform="translate(32.3 296.9) rotate(-90)" font-size="8" textLength="10.2" lengthAdjust="spacingAndGlyphs" fill="#222" stroke="#222" stroke-width="0.3" font-family="Liberation Sans">180</text>
<rect x="34.2" y="284.13" width="1.7" height="1.1" fill="#3a3a3a"/>
<rect x="34.2" y="277.02" width="1.7" height="1.1" fill="#3a3a3a"/>
<rect x="34.2" y="269.91" width="1.7" height="1.1" fill="#3a3a3a"/>
<rect x="34.2" y="262.79" width="1.7" height="1.1" fill="#3a3a3a"/>
<rect x="33.5" y="255.68" width="2.5" height="1.1" fill="#333"/>
<rect x="34.2" y="248.56" width="1.7" height="1.1" fill="#3a3a3a"/>
<rect x="34.2" y="241.45" width="1.7" height="1.1" fill="#3a3a3a"/>
<rect x="34.2" y="234.33" width="1.7" height="1.1" fill="#3a3a3a"/>
<rect x="34.2" y="227.22" width="1.7" height="1.1" fill="#3a3a3a"/>
<rect x="32.5" y="220.10" width="3.5" height="1.1" fill="#222"/>
<text transform="translate(32.3 225.7) rotate(-90)" font-size="8" textLength="10.2" lengthAdjust="spacingAndGlyphs" fill="#222" stroke="#222" stroke-width="0.3" font-family="Liberation Sans">200</text>
<rect x="34.2" y="212.99" width="1.7" height="1.1" fill="#3a3a3a"/>
<rect x="34.2" y="205.87" width="1.7" height="1.1" fill="#3a3a3a"/>
<rect x="34.2" y="198.75" width="1.7" height="1.1" fill="#3a3a3a"/>
<rect x="34.2" y="191.64" width="1.7" height="1.1" fill="#3a3a3a"/>
<rect x="33.5" y="184.53" width="2.5" height="1.1" fill="#333"/>
<rect x="34.2" y="177.41" width="1.7" height="1.1" fill="#3a3a3a"/>
<rect x="34.2" y="170.30" width="1.7" height="1.1" fill="#3a3a3a"/>
<rect x="34.2" y="163.18" width="1.7" height="1.1" fill="#3a3a3a"/>
<rect x="34.2" y="156.06" width="1.7" height="1.1" fill="#3a3a3a"/>
<rect x="32.5" y="148.95" width="3.5" height="1.1" fill="#222"/>
<text transform="translate(32.3 154.6) rotate(-90)" font-size="8" textLength="10.2" lengthAdjust="spacingAndGlyphs" fill="#222" stroke="#222" stroke-width="0.3" font-family="Liberation Sans">220</text>
<rect x="34.2" y="141.84" width="1.7" height="1.1" fill="#3a3a3a"/>
<rect x="34.2" y="134.72" width="1.7" height="1.1" fill="#3a3a3a"/>
<rect x="34.2" y="127.61" width="1.7" height="1.1" fill="#3a3a3a"/>
<rect x="34.2" y="120.49" width="1.7" height="1.1" fill="#3a3a3a"/>
<rect x="33.5" y="113.38" width="2.5" height="1.1" fill="#333"/>
<rect x="34.2" y="106.26" width="1.7" height="1.1" fill="#3a3a3a"/>
<rect x="34.2" y="99.15" width="1.7" height="1.1" fill="#3a3a3a"/>
<rect x="34.2" y="92.03" width="1.7" height="1.1" fill="#3a3a3a"/>
<rect x="34.2" y="84.92" width="1.7" height="1.1" fill="#3a3a3a"/>
<rect x="32.5" y="77.80" width="3.5" height="1.1" fill="#222"/>
<text transform="translate(32.3 83.4) rotate(-90)" font-size="8" textLength="10.2" lengthAdjust="spacingAndGlyphs" fill="#222" stroke="#222" stroke-width="0.3" font-family="Liberation Sans">240</text>
<rect x="34.2" y="70.69" width="1.7" height="1.1" fill="#3a3a3a"/>
<rect x="34.2" y="63.57" width="1.7" height="1.1" fill="#3a3a3a"/>
<rect x="34.2" y="56.46" width="1.7" height="1.1" fill="#3a3a3a"/>
<rect x="34.2" y="49.34" width="1.7" height="1.1" fill="#3a3a3a"/>
<rect x="33.5" y="42.23" width="2.5" height="1.1" fill="#333"/>
<rect x="34.2" y="35.11" width="1.7" height="1.1" fill="#3a3a3a"/>
<rect x="34.2" y="28.00" width="1.7" height="1.1" fill="#3a3a3a"/>
<rect x="34.2" y="20.88" width="1.7" height="1.1" fill="#3a3a3a"/>
<rect x="121" y="15" width="1" height="569" fill="#bdbdbd"/>
<rect x="813" y="15" width="1" height="569" fill="#9a9a9a"/>
<rect x="814" y="15" width="5" height="569" fill="#aaaaaa"/>
<ellipse cx="607.5" cy="309.6" rx="105.5" ry="129.6" fill="none" stroke="#5a5a5a" stroke-width="1.15"/>
<rect x="494" y="172" width="5" height="5" fill="#000"/>
<rect x="494" y="307" width="5" height="5" fill="#000"/>
<rect x="494" y="441" width="5" height="5" fill="#000"/>
<rect x="604" y="172" width="5" height="5" fill="#000"/>
<rect x="604" y="441" width="5" height="5" fill="#000"/>
<rect x="715" y="172" width="5" height="5" fill="#000"/>
<rect x="715" y="307" width="5" height="5" fill="#000"/>
<rect x="715" y="441" width="5" height="5" fill="#000"/>
<path d="M605 307 l4 4 M609 307 l-4 4" stroke="#000" stroke-width="1.4"/>
<rect x="605.5" y="178.5" width="3" height="3" fill="#fff" stroke="#333" stroke-width="1"/>
<path d="M266 330 L439 325 L439 322.4 L449.2 327.3 L439.6 332.2 L439.6 329.9 L266 331.1 Z" fill="#ea3336" stroke="#c42a2e" stroke-width="0.4" stroke-linejoin="round"/>
<defs><linearGradient id="rt" x1="743" x2="917" gradientUnits="userSpaceOnUse"><stop offset="0" stop-color="#e63a3c"/><stop offset="0.8" stop-color="#de4042"/><stop offset="1" stop-color="#c8b8bc"/></linearGradient></defs>
<path d="M917 324.4 L755 326.2 L754.6 323.4 L743.8 328.8 L755 333.7 L755 331.5 L917 325.9 Z" fill="url(#rt)" stroke="#c22a2e" stroke-width="0.4" stroke-linejoin="round"/>
</svg>
</body></html>
